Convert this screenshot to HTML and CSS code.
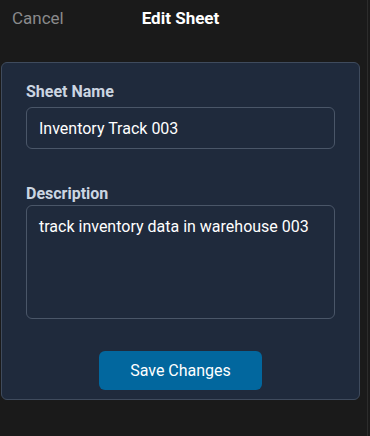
FILE: index.html
```html
<!DOCTYPE html>
<html>
<head>
<meta charset="utf-8">
<link rel="stylesheet" href="styles.css">
</head>
<body>
<div class="screen">
  <div class="sheet">
    <header class="topbar">
      <span class="cancel">Cancel</span>
      <span class="title">Edit Sheet</span>
      <span class="spacer"></span>
    </header>
    <form class="card">
      <div class="field field-name">
        <label class="label">Sheet Name</label>
        <div class="input">Inventory Track 003</div>
      </div>
      <div class="field field-desc">
        <label class="label label-desc">Description</label>
        <div class="input textarea">track inventory data in warehouse 003</div>
      </div>
      <div class="actions">
        <button type="button" class="save">Save Changes</button>
      </div>
    </form>
  </div>
  <div class="edge"></div>
</div>
</body>
</html>
```

FILE: styles.css
```css
html, body {
  margin: 0;
  padding: 0;
  background: #1a1a1a;
}
body {
  font-family: Roboto, "Liberation Sans", sans-serif;
  width: 370px;
  height: 436px;
  overflow: hidden;
}
.screen {
  display: flex;
  height: 436px;
}
.sheet {
  width: 360px;
  padding-left: 1px;
  box-sizing: border-box;
}
.edge {
  width: 1px;
  margin-left: 7px;
  background: #2c2c2c;
}
.topbar {
  display: grid;
  grid-template-columns: 1fr auto 1fr;
  align-items: center;
  height: 20px;
  padding: 8px 11px 0 11px;
  margin-bottom: 34px;
  font-size: 17px;
  line-height: 20px;
}
.cancel {
  color: #8a8a8c;
}
.title {
  color: #ffffff;
  font-weight: 700;
}
.card {
  margin: 0;
  background: #1f2a3c;
  border: 1px solid #3f4b5d;
  border-radius: 6px;
  padding: 19px 24px 9px 24px;
  box-sizing: border-box;
  width: 359px;
}
.field {
  display: flex;
  flex-direction: column;
}
.field-name {
  margin-bottom: 35px;
}
.field-desc {
  margin-bottom: 32px;
}
.label {
  color: #cbd5e1;
  font-size: 16px;
  font-weight: 700;
  line-height: 20px;
  margin-bottom: 5px;
}
.label-desc {
  margin-bottom: 1px;
}
.input {
  border: 1px solid #4a5668;
  border-radius: 6px;
  height: 42px;
  box-sizing: border-box;
  padding: 11px 12px 9px 12px;
  color: #ffffff;
  font-size: 16px;
  line-height: 20px;
}
.textarea {
  height: 114px;
}
.actions {
  display: flex;
  justify-content: center;
  margin-top: 1px;
}
.save {
  background: #02679e;
  color: #ffffff;
  border: none;
  border-radius: 6px;
  width: 163px;
  height: 39px;
  font-family: Roboto, "Liberation Sans", sans-serif;
  font-size: 16px;
  line-height: 20px;
  padding: 0;
}
```
